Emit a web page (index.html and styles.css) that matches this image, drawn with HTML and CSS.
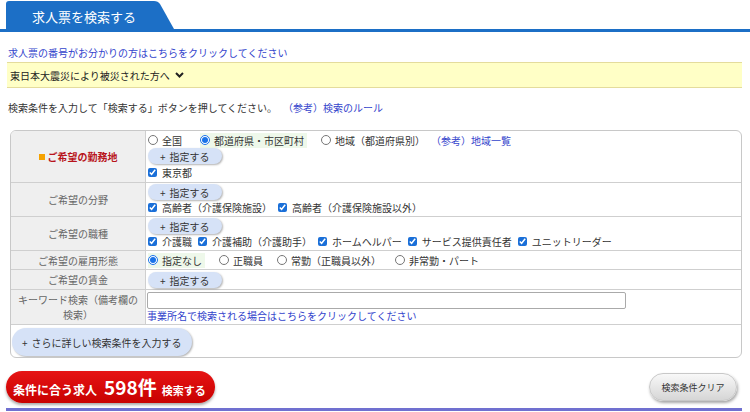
FILE: index.html
```html
<!DOCTYPE html>
<html lang="ja">
<head>
<meta charset="utf-8">
<title>求人票を検索する</title>
<link rel="stylesheet" href="styles.css">
</head>
<body>
<div class="tabbar">
  <div class="tab">
    <svg class="tab-bg" width="172" height="29" viewBox="0 0 172 29"><path d="M0 29 L0 4 Q0 1 3 1 L148 1 Q152 1 154 4 L168 29 Z" fill="#1c6fc6"/></svg>
    <span class="tab-text">求人票を検索する</span>
  </div>
</div>
<div class="main">
  <a class="link num-link">求人票の番号がお分かりの方はこちらをクリックしてください</a>
  <div class="notice">東日本大震災により被災された方へ<svg class="chev" width="9" height="6" viewBox="0 0 9 6"><path d="M1 1 L4.5 4.5 L8 1" fill="none" stroke="#222" stroke-width="2"/></svg></div>
  <p class="intro">検索条件を入力して「検索する」ボタンを押してください。<a class="link rule">（参考）検索のルール</a></p>

  <div class="form">
    <div class="row r1">
      <div class="label required"><span class="sq"></span>ご希望の勤務地</div>
      <div class="cell">
        <div class="line">
          <label class="opt first"><input type="radio" name="area">全国</label>
          <label class="opt on"><input type="radio" name="area" checked>都道府県・市区町村</label>
          <label class="opt"><input type="radio" name="area">地域（都道府県別）</label>
          <a class="link ref">（参考）地域一覧</a>
        </div>
        <div class="btnline"><span class="pill"><span class="plus">+</span>指定する</span></div>
        <div class="line"><label class="chk"><input type="checkbox" checked>東京都</label></div>
      </div>
    </div>
    <div class="row r2">
      <div class="label">ご希望の分野</div>
      <div class="cell">
        <div class="btnline"><span class="pill"><span class="plus">+</span>指定する</span></div>
        <div class="line tight">
          <label class="chk"><input type="checkbox" checked>高齢者（介護保険施設）</label>
          <label class="chk"><input type="checkbox" checked>高齢者（介護保険施設以外）</label>
        </div>
      </div>
    </div>
    <div class="row r3">
      <div class="label">ご希望の職種</div>
      <div class="cell">
        <div class="btnline"><span class="pill"><span class="plus">+</span>指定する</span></div>
        <div class="line tight">
          <label class="chk"><input type="checkbox" checked>介護職</label>
          <label class="chk"><input type="checkbox" checked>介護補助（介護助手）</label>
          <label class="chk"><input type="checkbox" checked>ホームヘルパー</label>
          <label class="chk"><input type="checkbox" checked>サービス提供責任者</label>
          <label class="chk"><input type="checkbox" checked>ユニットリーダー</label>
        </div>
      </div>
    </div>
    <div class="row r4">
      <div class="label">ご希望の雇用形態</div>
      <div class="cell">
        <div class="line">
          <label class="opt on"><input type="radio" name="emp" checked>指定なし</label>
          <label class="opt"><input type="radio" name="emp">正職員</label>
          <label class="opt"><input type="radio" name="emp">常勤（正職員以外）</label>
          <label class="opt"><input type="radio" name="emp">非常勤・パート</label>
        </div>
      </div>
    </div>
    <div class="row r5">
      <div class="label">ご希望の賃金</div>
      <div class="cell">
        <div class="btnline"><span class="pill"><span class="plus">+</span>指定する</span></div>
      </div>
    </div>
    <div class="row r6">
      <div class="label two">キーワード検索（備考欄の検索）</div>
      <div class="cell">
        <input class="kw" type="text">
        <a class="link office">事業所名で検索される場合はこちらをクリックしてください</a>
      </div>
    </div>
    <div class="row r7">
      <span class="pill big"><span class="plus">+</span>さらに詳しい検索条件を入力する</span>
    </div>
  </div>

  <div class="actions">
    <button class="search"><span class="s1">条件に合う求人</span><span class="num">598件</span><span class="s2">検索する</span></button>
    <button class="clear">検索条件クリア</button>
  </div>
  <div class="bottom-line"></div>
</div>
</body>
</html>
```

FILE: styles.css
```css
* { box-sizing: border-box; }
body {
  margin: 0;
  font-family: "Noto Sans CJK JP", "Noto Sans", sans-serif;
  font-size: 10px;
  color: #333;
  background: #fff;
}
.tabbar {
  height: 32px;
  border-bottom: 3px solid #1c6fc6;
  padding-left: 6px;
}
.tab { position: relative; width: 172px; height: 29px; }
.tab-bg { position: absolute; left: 0; top: 0; }
.tab-text {
  position: relative;
  display: block;
  padding: 3px 0 0 26px;
  line-height: 28px;
  font-size: 13px;
  color: #fff;
}
.main { width: 742px; padding-left: 6px; }
.link { color: #3344cc; text-decoration: none; }
.num-link { display: block; margin-top: 14px; padding-left: 2px; line-height: 14px; }
.notice {
  margin: 2px 0 0 1px;
  height: 26px;
  border-top: 1px solid #e4dc9c;
  border-bottom: 1px solid #e4dc9c;
  background: #ffffc6;
  padding-left: 3px;
  display: flex;
  align-items: center;
  color: #222;
}
.chev { margin-left: 5px; }
.intro { margin: 13px 0 0; padding-left: 2px; line-height: 14px; }
.rule { margin-left: 11px; }

.form {
  margin: 15px 0 0 4px;
  border: 1px solid #c8c8c8;
  border-radius: 6px;
  overflow: hidden;
}
.row { display: flex; border-bottom: 1px solid #cfcfcf; }
.row:last-child { border-bottom: none; }
.label {
  flex: 0 0 135px;
  border-right: 1px solid #cfcfcf;
  background: #efefef;
  display: flex;
  align-items: center;
  justify-content: center;
  text-align: center;
  color: #666;
  padding: 0 6px;
  line-height: 15px;
}
.label.required { color: #b8141b; font-weight: bold; }
.sq { display: inline-block; width: 6px; height: 6px; background: #f5a200; margin-right: 3px; }
.cell { flex: 1; padding: 1px 2px; }
.line { height: 16px; display: flex; align-items: center; white-space: nowrap; }
.line.tight { height: 15px; }
.btnline { height: 16px; display: flex; align-items: center; }
.r1 .cell { padding-bottom: 2px; }
.r4 .cell { padding: 1px 2px; }
.r5 .cell { padding: 2px 2px 1px; }
.r6 .cell { padding: 2px 2px 1px 1px; }
.r7 { padding: 3px 1px 1px; height: 32px; }

.opt { display: inline-flex; align-items: center; gap: 4px; margin-right: 14px; }
.opt.first { margin-right: 18px; }
.opt.on { background: #eef8ea; padding-right: 3px; }
.opt input {
  width: 10px; height: 10px; margin: 0;
  accent-color: #1a73e8;
}
.ref { margin-left: -8px; }
.chk { display: inline-flex; align-items: center; gap: 5px; margin-right: 6px; }
.chk input {
  width: 9px; height: 9px; margin: 0;
  accent-color: #1a6fd8;
}
.pill {
  display: inline-flex;
  align-items: center;
  height: 16px;
  padding: 0 12px;
  border-radius: 8px;
  background: #d6e2f7;
  box-shadow: 1px 1px 2px rgba(0,0,0,.3);
  color: #333;
  white-space: nowrap;
}
.plus { margin-right: 4px; }
.pill.big { height: 28px; padding: 0 10px; border-radius: 14px; }
.kw {
  display: block;
  width: 479px;
  height: 17px;
  margin: 0;
  border: 1px solid #aaa;
  border-radius: 2px;
  background: #fff;
}
.office { display: block; line-height: 14px; margin-top: 0; }

.actions {
  margin-top: 13px;
  display: flex;
  align-items: center;
  justify-content: space-between;
  padding-right: 5px;
}
.search {
  width: 209px;
  height: 32px;
  border: none;
  border-radius: 16px;
  background: linear-gradient(#e61414, #c80000);
  box-shadow: 0 2px 3px rgba(0,0,0,.35);
  color: #fff;
  font-family: inherit;
  font-weight: bold;
  padding: 0 0 0 7px;
  display: flex;
  align-items: baseline;
  justify-content: flex-start;
  line-height: 32px;
}
.s1 { font-size: 12px; }
.num { font-size: 19px; margin: 0 5px 0 7px; }
.s2 { font-size: 11px; }
.clear {
  width: 88px;
  height: 28px;
  border: 1px solid #c8c8c8;
  border-radius: 14px;
  background: linear-gradient(#f8f8f8, #d6d6d6);
  box-shadow: 1px 2px 3px rgba(0,0,0,.35);
  color: #333;
  font-family: inherit;
  font-size: 9px;
  padding: 0;
}
.bottom-line { margin-top: 5px; height: 3px; background: #7070d0; }
```
